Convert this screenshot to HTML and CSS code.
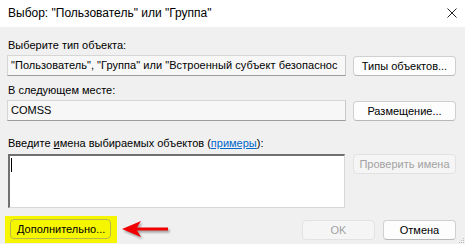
FILE: index.html
```html
<!DOCTYPE html>
<html lang="ru">
<head>
<meta charset="utf-8">
<title>Выбор</title>
<link rel="stylesheet" href="styles.css">
</head>
<body>
<div class="dialog">
  <div class="titlebar">
    <span class="title">Выбор: "Пользователь" или "Группа"</span>
    <svg class="close" width="10" height="10" viewBox="0 0 10 10"><path d="M0.5 0.5L9.5 9.5M9.5 0.5L0.5 9.5" stroke="#222" stroke-width="1" fill="none"/></svg>
  </div>
  <div class="content">
    <div class="label l1">Выберите тип объекта:</div>
    <div class="row r1">
      <div class="field wide">"Пользователь", "Группа" или "Встроенный субъект безопаснос</div>
      <div class="btn">Типы объектов...</div>
    </div>
    <div class="label l2">В следующем месте:</div>
    <div class="row r2">
      <div class="field">COMSS</div>
      <div class="btn">Размещение...</div>
    </div>
    <div class="label l3">Введите <u>и</u>мена выбираемых объектов (<a class="link" href="#">примеры</a>):</div>
    <div class="row r3">
      <div class="textarea"><span class="caret"></span></div>
      <div class="btn disabled">Проверить имена</div>
    </div>
    <div class="footer">
      <div class="highlight"><div class="btn adv">Дополнительно...</div></div>
      <svg class="arrow" width="52" height="22" viewBox="0 0 52 22">
        <defs><filter id="sh" x="-20%" y="-40%" width="140%" height="180%"><feGaussianBlur stdDeviation="1.2"/></filter></defs>
        <g transform="translate(1.5,2)" opacity="0.35" filter="url(#sh)"><path d="M1 10L20 2L16 8.5L47 8.5L47 11.5L16 11.5L20 18Z" fill="#000"/></g>
        <path d="M1 10L20 2L16 8.5L47 8.5L47 11.5L16 11.5L20 18Z" fill="#f00000"/>
      </svg>
      <div class="spacer"></div>
      <div class="btn small disabled">OK</div>
      <div class="btn small">Отмена</div>
    </div>
  </div>
  <svg class="grip" width="7" height="7" viewBox="0 0 7 7">
    <rect x="5" y="1" width="1" height="1" fill="#bbb"/>
    <rect x="3" y="3" width="1" height="1" fill="#bbb"/><rect x="5" y="3" width="1" height="1" fill="#bbb"/>
    <rect x="1" y="5" width="1" height="1" fill="#bbb"/><rect x="3" y="5" width="1" height="1" fill="#bbb"/><rect x="5" y="5" width="1" height="1" fill="#bbb"/>
  </svg>
</div>
</body>
</html>
```
FILE: styles.css
```css
html, body {
  margin: 0;
  padding: 0;
  background: #f0f0f0;
}
.dialog {
  position: relative;
  width: 465px;
  height: 244px;
  overflow: hidden;
  font-family: "Liberation Sans", Arial, sans-serif;
  font-size: 11px;
  color: #000;
  background: #f0f0f0;
}
.titlebar {
  height: 27px;
  background: #fff;
  display: flex;
  align-items: center;
  padding: 0 8px 2px 8px;
  box-sizing: border-box;
}
.title {
  font-size: 12px;
  flex: 1;
}
.content {
  padding: 0 9px 0 7px;
}
.label {
  line-height: 15px;
  height: 15px;
  padding-left: 1px;
  white-space: nowrap;
}
.l1 { margin-top: 11px; }
.l2 { margin-top: 7px; }
.l3 { margin-top: 15px; }
.row {
  display: flex;
  align-items: center;
  gap: 7px;
}
.r1, .r2 { margin-top: 2px; }
.r3 { margin-top: 3px; align-items: flex-start; }
.field {
  flex: 1;
  min-width: 0;
  height: 21px;
  box-sizing: border-box;
  background: #f7f7f7;
  border: 1px solid #d6d6d6;
  border-bottom-color: #9c9c9c;
  border-right-color: #c8c8c8;
  padding: 0 0 0 3px;
  line-height: 19px;
  white-space: nowrap;
  overflow: hidden;
}
.field.wide {
  letter-spacing: 0.05px;
}
.btn {
  width: 103px;
  height: 20px;
  box-sizing: border-box;
  background: #fdfdfd;
  border: 1px solid #d0d0d0;
  border-bottom-color: #b8b8b8;
  border-radius: 4px;
  display: flex;
  align-items: center;
  justify-content: center;
  white-space: nowrap;
  flex: none;
}
.btn.disabled {
  background: #f5f5f5;
  border-color: #e2e2e2;
  color: #a2a2a2;
}
.textarea {
  flex: 1;
  height: 54px;
  margin: 0 1px;
  box-sizing: border-box;
  background: #fff;
  border: 1px solid #d8d8d8;
  border-top: 2px solid #707070;
  border-left: 2px solid #707070;
  padding: 2px 0 0 1px;
}
.caret {
  display: block;
  width: 1px;
  height: 14px;
  background: #000;
}
.link {
  color: #0066cc;
  text-decoration: underline;
}
u {
  text-decoration: underline;
}
.footer {
  display: flex;
  align-items: center;
  margin-top: 8px;
  margin-left: -2px;
  gap: 8px;
}
.highlight {
  background: #f6f600;
  padding: 3px 6px 4px 5px;
}
.btn.adv {
  width: 101px;
  background: transparent;
  border-color: #b9b94a;
  justify-content: flex-start;
  padding-left: 6px;
}
.arrow {
  margin-left: -4px;
  margin-top: 0;
}
.spacer { flex: 1; }
.btn.small { width: 73px; }
.grip {
  position: absolute;
  right: 0;
  bottom: 0;
}
```
